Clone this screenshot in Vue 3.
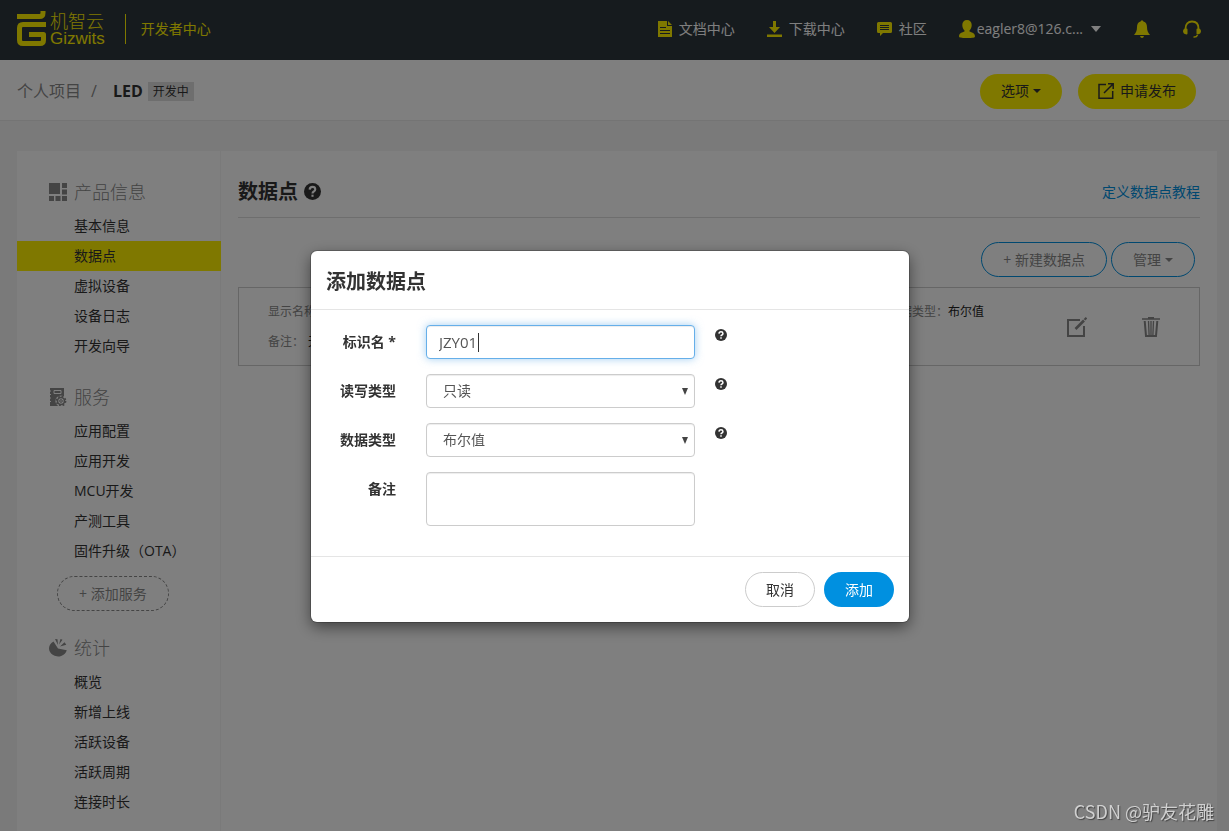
<script setup>
import { ref, onMounted } from 'vue'

const groups = [
  { title: '产品信息', icon: 'grid', items: ['基本信息', '数据点', '虚拟设备', '设备日志', '开发向导'] },
  { title: '服务', icon: 'service', items: ['应用配置', '应用开发', 'MCU开发', '产测工具', '固件升级（OTA）'], action: '+ 添加服务' },
  { title: '统计', icon: 'chart', items: ['概览', '新增上线', '活跃设备', '活跃周期', '连接时长'] },
]
const active = ref('数据点')
const name = ref('JZY01')
const access = ref('只读')
const kind = ref('布尔值')
const note = ref('')
const nameInput = ref(null)

onMounted(() => nameInput.value.focus())
</script>

<template>
  <div class="page">
    <header class="topbar">
      <a class="logo" href="#">
        <svg class="logo-mark" width="29" height="36" viewBox="0 0 29 36" fill="none" stroke="#fff000">
          <path d="M0 5.500H22.500Q26 5.500 26 2V0" stroke-width="5" />
          <path d="M29 13.500H6Q2.500 13.500 2.500 17V29Q2.500 32.500 6 32.500H23Q26.500 32.500 26.500 29V23.500H12" stroke-width="5" stroke-linejoin="round" />
        </svg>
        <span class="logo-words"><span class="logo-cn">机智云</span><span class="logo-en">Gizwits</span></span>
      </a>
      <span class="site">开发者中心</span>
      <nav class="nav">
        <a href="#">
          <svg width="14" height="16" viewBox="0 0 14 16"><path d="M0 0h9v5h5v11H0zM10 0l4 4h-4z" fill="#fff000" /><path d="M2 6.500h6M2 9.500h10M2 12.500h10" stroke="#2d363c" stroke-width="1.200" /></svg>
          文档中心
        </a>
        <a href="#">
          <svg width="15" height="16" viewBox="0 0 15 16"><path d="M6 0h3v6h4l-5.500 6L2 6h4zM0 13.500h15V16H0z" fill="#fff000" /></svg>
          下载中心
        </a>
        <a href="#">
          <svg width="15" height="14" viewBox="0 0 15 14"><path d="M1.500 0h12Q15 0 15 1.500v8q0 1.500-1.500 1.500H6l-3 3v-3H1.500Q0 11 0 9.500v-8Q0 0 1.500 0z" fill="#fff000" /><path d="M3 3.500h9M3 5.500h9M3 7.500h9" stroke="#2d363c" /></svg>
          社区
        </a>
        <a class="user" href="#">
          <svg width="16" height="18" viewBox="0 0 16 18"><path d="M8 0c3 0 4.700 2 4.700 5 0 2.500-1 4.500-2.200 5.500v1c2 .8 5.500 1.500 5.500 5 0 1-2 1.500-8 1.500s-8-.5-8-1.500c0-3.500 3.500-4.200 5.500-5v-1C4.300 9.500 3.300 7.500 3.300 5 3.300 2 5 0 8 0z" fill="#fff000" /></svg>
          <span>eagler8@126.c...</span>
          <svg class="user-caret" width="10" height="6" viewBox="0 0 10 6"><path d="M0 0h10L5 6z" fill="#fff" /></svg>
        </a>
        <a href="#" aria-label="通知">
          <svg width="18" height="18" viewBox="0 0 18 18"><path d="M9 0l1.500 1.500C13 2.300 14 4.500 14 7c0 4 1 5.500 3 8H1c2-2.500 3-4 3-8 0-2.500 1-4.700 3.500-5.500zM7 16h4q-.5 2-2 2t-2-2z" fill="#fff000" /></svg>
        </a>
        <a href="#" aria-label="客服">
          <svg width="18" height="18" viewBox="0 0 18 18"><path d="M2.500 11V8.500C2.500 4 5 1.500 9 1.500S15.500 4 15.500 8.500V11" fill="none" stroke="#fff000" stroke-width="1.800" /><path d="M2 8.500h1.500q1 0 1 1v4q0 1-1 1-3.500-.5-3.500-3.500Q0 9 2 8.500zM16 8.500h-1.500q-1 0-1 1v4q0 1 1 1 3.500-.5 3.500-3.500 0-2-2-2.500z" fill="#fff000" /><path d="M10.500 17q3 .3 4-2" fill="none" stroke="#fff000" stroke-width="1.600" /></svg>
        </a>
      </nav>
    </header>

    <div class="subbar">
      <div class="crumbs">
        <a href="#">个人项目</a><span class="slash">/</span><strong>LED</strong><span class="tag">开发中</span>
      </div>
      <div class="sub-actions">
        <button class="pill yellow" type="button">选项<svg class="drop" width="8" height="4" viewBox="0 0 8 4"><path d="M0 0h8L4 4z" fill="currentColor" /></svg></button>
        <button class="pill yellow publish" type="button">
          <svg width="16" height="16" viewBox="0 0 16 16" fill="none" stroke="currentColor" stroke-width="1.500"><path d="M8 1.500H1v13.700h13.700V8M6 10L15 1M10 .8h5.200V6" /></svg>
          申请发布
        </button>
      </div>
    </div>

    <div class="panel">
      <aside class="sidebar">
        <section v-for="g in groups" :key="g.title" class="group">
          <h2>
            <svg v-if="g.icon === 'grid'" width="18" height="18" viewBox="0 0 18 18" fill="#888"><path d="M0 0h11v11H0zM13 0h5v5h-5zM13 6.500h5v5h-5zM13 13h5v5h-5zM6.500 13h5v5h-5zM0 13h5v5H0z" /></svg>
            <svg v-else-if="g.icon === 'service'" width="18" height="18" viewBox="0 0 18 18"><path d="M1 0h14v18H1z" fill="#888" /><path d="M5 2.500h7v3H5z" fill="none" stroke="#fff" /><path d="M0 3h2M0 6.500h2M0 10h2M0 13.500h2" stroke="#fff" /><circle cx="12" cy="13" r="5.600" fill="#fff" /><circle cx="12" cy="13" r="3.500" fill="none" stroke="#888" stroke-width="1.600" /><circle cx="12" cy="13" r="4.600" fill="none" stroke="#888" stroke-width="1.600" stroke-dasharray="1.800 1.812" /><circle cx="12" cy="13" r="1.300" fill="none" stroke="#888" /></svg>
            <svg v-else width="18" height="18" viewBox="0 0 18 18" fill="#888"><path d="M4.500 2.500L9 9.500l8.800 1.700A9 8 0 1 1 4.500 2.500z" /><path d="M6 0l2.500.2.500 5.800zM10 5.500L11.500 0l2 .7zM11 7.500l4.500-4.300 1.800 2.600z" /></svg>
            {{ g.title }}
          </h2>
          <ul>
            <li v-for="i in g.items" :key="i"><a href="#" :class="{ active: i === active }" @click.prevent="active = i">{{ i }}</a></li>
          </ul>
          <button v-if="g.action" class="pill add-service" type="button">{{ g.action }}</button>
        </section>
      </aside>

      <main class="content">
        <div class="content-head">
          <h1>数据点 <svg width="17" height="17" viewBox="0 0 16 16"><circle cx="8" cy="8" r="8" fill="#333" /><path d="M5.300 6.200Q5.500 3.700 8 3.700t2.600 2.200Q10.600 7.200 9.200 8 8 8.600 8 9.800" fill="none" stroke="#fff" stroke-width="2" /><path d="M7 11h2v2H7z" fill="#fff" /></svg></h1>
          <a href="#">定义数据点教程</a>
        </div>
        <div class="tools">
          <button class="pill outline" type="button">+ 新建数据点</button>
          <button class="pill outline" type="button">管理<svg class="drop" width="8" height="4" viewBox="0 0 8 4"><path d="M0 0h8L4 4z" fill="currentColor" /></svg></button>
        </div>
        <article class="point">
          <div class="point-info">
            <p>显示名称：</p>
            <p>数据类型：<b>布尔值</b></p>
            <p class="remark">备注：<b>无</b></p>
          </div>
          <div class="point-actions">
            <button type="button" aria-label="编辑">
              <svg width="20" height="20" viewBox="0 0 20 20" fill="none" stroke="#888"><path d="M13 3H1v16h16V9" stroke-width="2" /><path d="M8.500 12L17 3.500" stroke-width="2.600" /><path d="M17.500 2.800L19.500 .8" stroke-width="2.200" /></svg>
            </button>
            <button type="button" aria-label="删除">
              <svg width="18" height="20" viewBox="0 0 18 20" fill="none" stroke="#888"><path d="M0 2h18M6 .8h6" stroke-width="1.600" /><path d="M2.700 4l1.300 15h10l1.300-15" stroke-width="2" /><path d="M6.500 4l.6 14M9 4v14M11.500 4l-.6 14" stroke-width="1.300" /></svg>
            </button>
          </div>
        </article>
      </main>
    </div>

    <div class="overlay">
      <form class="modal" role="dialog" aria-labelledby="dlg-title" @submit.prevent>
        <h2 id="dlg-title" class="modal-title">添加数据点</h2>
        <div class="modal-body">
          <label for="f-name">标识名 *</label>
          <div class="field">
            <input id="f-name" ref="nameInput" v-model="name" type="text" />
            <i class="caret"></i>
          </div>
          <svg class="help" width="12" height="12" viewBox="0 0 16 16"><circle cx="8" cy="8" r="8" fill="#333" /><path d="M5.300 6.200Q5.500 3.700 8 3.700t2.600 2.200Q10.600 7.200 9.200 8 8 8.600 8 9.800" fill="none" stroke="#fff" stroke-width="2" /><path d="M7 11h2v2H7z" fill="#fff" /></svg>

          <label for="f-access">读写类型</label>
          <div class="field">
            <select id="f-access" v-model="access"><option>只读</option><option>可写</option></select>
            <svg width="6" height="7" viewBox="0 0 6 7"><path d="M0 0h6L3 7z" fill="#444" /></svg>
          </div>
          <svg class="help" width="12" height="12" viewBox="0 0 16 16"><circle cx="8" cy="8" r="8" fill="#333" /><path d="M5.300 6.200Q5.500 3.700 8 3.700t2.600 2.200Q10.600 7.200 9.200 8 8 8.600 8 9.800" fill="none" stroke="#fff" stroke-width="2" /><path d="M7 11h2v2H7z" fill="#fff" /></svg>

          <label for="f-kind">数据类型</label>
          <div class="field">
            <select id="f-kind" v-model="kind"><option>布尔值</option><option>数值</option></select>
            <svg width="6" height="7" viewBox="0 0 6 7"><path d="M0 0h6L3 7z" fill="#444" /></svg>
          </div>
          <svg class="help" width="12" height="12" viewBox="0 0 16 16"><circle cx="8" cy="8" r="8" fill="#333" /><path d="M5.300 6.200Q5.500 3.700 8 3.700t2.600 2.200Q10.600 7.200 9.200 8 8 8.600 8 9.800" fill="none" stroke="#fff" stroke-width="2" /><path d="M7 11h2v2H7z" fill="#fff" /></svg>

          <label for="f-note">备注</label>
          <textarea id="f-note" v-model="note"></textarea>
        </div>
        <footer class="modal-foot">
          <button class="pill cancel" type="button">取消</button>
          <button class="pill submit" type="submit">添加</button>
        </footer>
      </form>
    </div>
    <span class="watermark">CSDN @驴友花雕</span>
  </div>
</template>

<style>
body { background: #f5f5f5; }
</style>

<style scoped>
* { box-sizing: border-box; }
.page {
  min-height: 100vh; display: flex; flex-direction: column;
  font: 14px/20px "Open Sans", "Noto Sans CJK SC", sans-serif; color: #333;
}
svg { flex: none; display: block; }
a { color: inherit; text-decoration: none; }
button, input, select, textarea { font: inherit; color: inherit; }
button { cursor: pointer; }
h1, h2, p, ul { margin: 0; padding: 0; }
ul { list-style: none; }

.topbar { height: 60px; padding: 0 28px 2px 17px; display: flex; align-items: center; background: #2d363c; }
.logo { display: flex; align-items: center; gap: 4px; color: #fff000; padding-right: 20px; }
.logo-words { display: flex; flex-direction: column; }
.logo-cn { font: 300 18px/20px "Noto Sans CJK SC", sans-serif; }
.logo-en { font: 17px/18px "Liberation Sans", sans-serif; }
.site { color: #fff000; border-left: 1px solid #fff000; padding-left: 15px; line-height: 30px; }
.nav { margin-left: auto; display: flex; align-items: center; gap: 32px; color: #fff; }
.nav a { display: flex; align-items: center; gap: 7px; }
.nav .user { gap: 2px; }
.user-caret { margin-left: 6px; }

.subbar {
  padding: 13px 33px 11px 17px; display: flex; justify-content: space-between; align-items: center;
  background: #fff; border-bottom: 1px solid #e8e8e8; height: 61px;
}
.crumbs { display: flex; align-items: center; font-size: 16px; }
.crumbs a, .slash { color: #888; }
.slash { margin: 0 16px 0 10px; }
.tag { margin-left: 5px; padding: 0 5px; font-size: 12px; line-height: 19px; background: #ddd; }
.sub-actions { display: flex; gap: 16px; }
.pill {
  height: 35px; padding: 0 20px; border: 1px solid transparent; border-radius: 18px;
  display: inline-flex; align-items: center; justify-content: center; background: none; white-space: nowrap;
}
.drop { margin-left: 4px; }
.yellow { background: #fff000; }
.publish { gap: 6px; padding: 0 19px; }

.panel { flex: 1; margin: 30px 12px 0 17px; display: flex; background: #fff; }
.sidebar { width: 204px; flex: none; padding-top: 22px; border-right: 1px solid #f5f5f5; }
.group { margin-bottom: 17px; }
.group h2 { height: 38px; padding-left: 32px; display: flex; align-items: center; gap: 7px; font-size: 18px; font-weight: 300; color: #888; }
.group li a { display: block; padding-left: 57px; line-height: 30px; }
.group li .active { background: #fff000; margin-right: -1px; }
.add-service { margin: 10px 0 1px 40px; padding: 0 21px; border: 1px dashed #888; color: #888; }

.content { flex: 1; min-width: 0; padding: 15px 17px 0 17px; }
.content-head { display: flex; align-items: center; justify-content: space-between; height: 52px; border-bottom: 1px solid #ddd; }
h1 { display: flex; align-items: center; gap: 6px; font-size: 20px; line-height: 30px; }
.content-head a { color: #0090e0; }
.tools { display: flex; justify-content: flex-end; gap: 4px; padding: 24px 5px 10px 0; }
.outline { padding: 0 21px; border-color: #0090e0; color: #888; }
.point { display: flex; align-items: center; justify-content: space-between; border: 1px solid #ccc; padding: 9px 39px 8px 29px; font-size: 12px; }
.point-info { flex: 1; display: grid; grid-template-columns: 620px auto; line-height: 30px; color: #888; }
.point-info b { font-weight: 400; color: #222; }
.remark b { margin-left: 4px; }
.point-actions { display: flex; gap: 55px; }
.point-actions button { padding: 0; border: 0; background: none; }

.overlay { position: fixed; inset: 0; display: flex; justify-content: center; align-items: flex-start; padding: 251px 9px 0 0; background: rgba(0, 0, 0, 0.5); }
.modal { width: 598px; max-width: 100%; background: #fff; border-radius: 6px; box-shadow: 0 5px 15px rgba(0, 0, 0, 0.5), 0 0 0 1px rgba(0, 0, 0, 0.2); }
.modal-title { padding: 17px 15px 13px; font-size: 20px; line-height: 28px; border-bottom: 1px solid #e5e5e5; }
.modal-body { padding: 15px 15px 30px; display: grid; grid-template-columns: 100px 269px 1fr; row-gap: 15px; align-items: start; }
label { grid-column: 1; padding-right: 30px; text-align: right; font-weight: 700; line-height: 34px; white-space: nowrap; }
.modal-body input, select, textarea {
  width: 100%; height: 34px; border: 1px solid #ccc; border-radius: 4px; background: #fff; color: #555;
  outline: none; appearance: none; box-shadow: inset 0 1px 1px rgba(0, 0, 0, 0.075);
}
.modal-body input { padding: 0 12px; display: block; font-size: 15px; caret-color: transparent; }
.modal-body input:focus { border-color: #66afe9; box-shadow: inset 0 1px 1px rgba(0, 0, 0, 0.075), 0 0 8px rgba(102, 175, 233, 0.6); }
select { padding: 0 16px; display: block; }
.field { position: relative; }
.field svg { position: absolute; right: 7px; top: 14px; pointer-events: none; }
.caret { position: absolute; left: 52px; top: 8px; width: 1px; height: 19px; background: #333; pointer-events: none; }
textarea { height: 54px; resize: none; display: block; padding: 6px 12px; }
.help { margin: 4px 0 0 20px; }
.modal-foot { padding: 15px; display: flex; justify-content: flex-end; gap: 9px; border-top: 1px solid #e5e5e5; }
.cancel { border-color: #ccc; }
.submit { background: #0090e0; color: #fff; }

.watermark { position: fixed; right: 15px; bottom: 7px; font: 18px/26px "Noto Sans CJK SC", sans-serif; color: #d0d0d0; text-shadow: 1px 1px 1px #444; }
</style>
